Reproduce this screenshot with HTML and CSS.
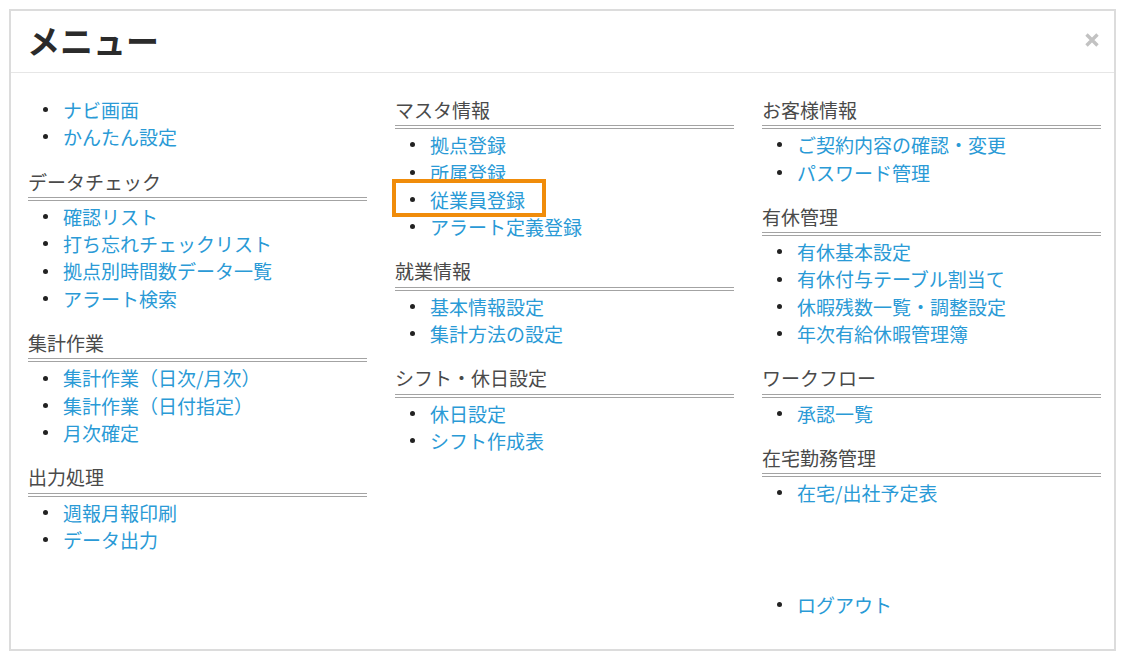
FILE: index.html
```html
<!DOCTYPE html>
<html lang="ja">
<head>
<meta charset="utf-8">
<title>メニュー</title>
<link rel="stylesheet" href="styles.css">
</head>
<body>
<div class="modal">
  <div class="modal-header">
    <h1 class="modal-title">メニュー</h1>
    <button class="close" type="button" aria-label="閉じる">
      <svg width="14" height="14" viewBox="0 0 14 14"><path d="M1.5 1.5 L12.5 12.5 M12.5 1.5 L1.5 12.5" stroke="#c2c2c2" stroke-width="3.4" fill="none"/></svg>
    </button>
  </div>
  <div class="modal-body">
    <div class="col">
      <ul class="menu first">
        <li><a href="#">ナビ画面</a></li>
        <li><a href="#">かんたん設定</a></li>
      </ul>
      <h3 class="sec">データチェック</h3>
      <ul class="menu">
        <li><a href="#">確認リスト</a></li>
        <li><a href="#">打ち忘れチェックリスト</a></li>
        <li><a href="#">拠点別時間数データ一覧</a></li>
        <li><a href="#">アラート検索</a></li>
      </ul>
      <h3 class="sec">集計作業</h3>
      <ul class="menu">
        <li><a href="#">集計作業（日次/月次）</a></li>
        <li><a href="#">集計作業（日付指定）</a></li>
        <li><a href="#">月次確定</a></li>
      </ul>
      <h3 class="sec">出力処理</h3>
      <ul class="menu">
        <li><a href="#">週報月報印刷</a></li>
        <li><a href="#">データ出力</a></li>
      </ul>
    </div>
    <div class="col">
      <h3 class="sec">マスタ情報</h3>
      <ul class="menu">
        <li><a href="#">拠点登録</a></li>
        <li><a href="#">所属登録</a></li>
        <li class="marked"><a href="#">従業員登録</a><span class="highlight"></span></li>
        <li><a href="#">アラート定義登録</a></li>
      </ul>
      <h3 class="sec">就業情報</h3>
      <ul class="menu">
        <li><a href="#">基本情報設定</a></li>
        <li><a href="#">集計方法の設定</a></li>
      </ul>
      <h3 class="sec">シフト・休日設定</h3>
      <ul class="menu">
        <li><a href="#">休日設定</a></li>
        <li><a href="#">シフト作成表</a></li>
      </ul>
    </div>
    <div class="col">
      <h3 class="sec">お客様情報</h3>
      <ul class="menu">
        <li><a href="#">ご契約内容の確認・変更</a></li>
        <li><a href="#">パスワード管理</a></li>
      </ul>
      <h3 class="sec">有休管理</h3>
      <ul class="menu">
        <li><a href="#">有休基本設定</a></li>
        <li><a href="#">有休付与テーブル割当て</a></li>
        <li><a href="#">休暇残数一覧・調整設定</a></li>
        <li><a href="#">年次有給休暇管理簿</a></li>
      </ul>
      <h3 class="sec">ワークフロー</h3>
      <ul class="menu">
        <li><a href="#">承認一覧</a></li>
      </ul>
      <h3 class="sec">在宅勤務管理</h3>
      <ul class="menu">
        <li><a href="#">在宅/出社予定表</a></li>
      </ul>
      <ul class="menu logout">
        <li><a href="#">ログアウト</a></li>
      </ul>
    </div>
  </div>
</div>
</body>
</html>
```
FILE: styles.css
```css
html, body {
  margin: 0;
  padding: 0;
  background: #ffffff;
}

body {
  font-family: "Noto Sans CJK JP", "Noto Sans", "Liberation Sans", sans-serif;
  color: #333333;
}

.modal {
  margin: 9px 0 0 9px;
  width: 1107px;
  height: 642px;
  box-sizing: border-box;
  border: 2px solid #dcdcdc;
  background: #ffffff;
  display: flex;
  flex-direction: column;
}

.modal-header {
  height: 62px;
  box-sizing: border-box;
  border-bottom: 1px solid #e6e6e6;
  display: flex;
  align-items: center;
  justify-content: space-between;
  padding: 0 15px 3px 16px;
}

.modal-title {
  margin: 0;
  font-size: 33px;
  font-weight: 700;
  line-height: 40px;
  color: #2b2b2b;
}

.close {
  border: 0;
  background: none;
  padding: 0;
  margin: 0;
  width: 14px;
  height: 14px;
  display: flex;
  cursor: pointer;
}

.modal-body {
  flex: 1;
  display: grid;
  grid-template-columns: 339px 339px 339px;
  column-gap: 28px;
  align-items: start;
  padding: 23px 0 0 17px;
}

.col {
  display: block;
}

.sec {
  margin: 0;
  font-size: 19px;
  font-weight: 400;
  line-height: 27.3px;
  color: #4a4a4a;
  padding-bottom: 2px;
  border-bottom: 4px double #a3a3a3;
}

.menu {
  list-style: none;
  margin: 2px 0 17px;
  padding: 0 0 0 15px;
}

.menu.first {
  margin-top: 0;
}

.menu.logout {
  margin-top: 84px;
}

.menu li {
  display: flex;
  align-items: center;
  font-size: 19px;
  line-height: 27.3px;
  white-space: nowrap;
}

.menu li::before {
  content: "";
  width: 5px;
  height: 5px;
  border-radius: 50%;
  background: #222222;
  margin-right: 15px;
  flex: none;
}

.menu a {
  color: #2a9ad6;
  text-decoration: none;
}

.marked {
  position: relative;
}

.highlight {
  position: absolute;
  left: -18px;
  top: -7px;
  width: 154px;
  height: 38px;
  box-sizing: border-box;
  border: 4px solid #f08c0a;
  pointer-events: none;
}
```
